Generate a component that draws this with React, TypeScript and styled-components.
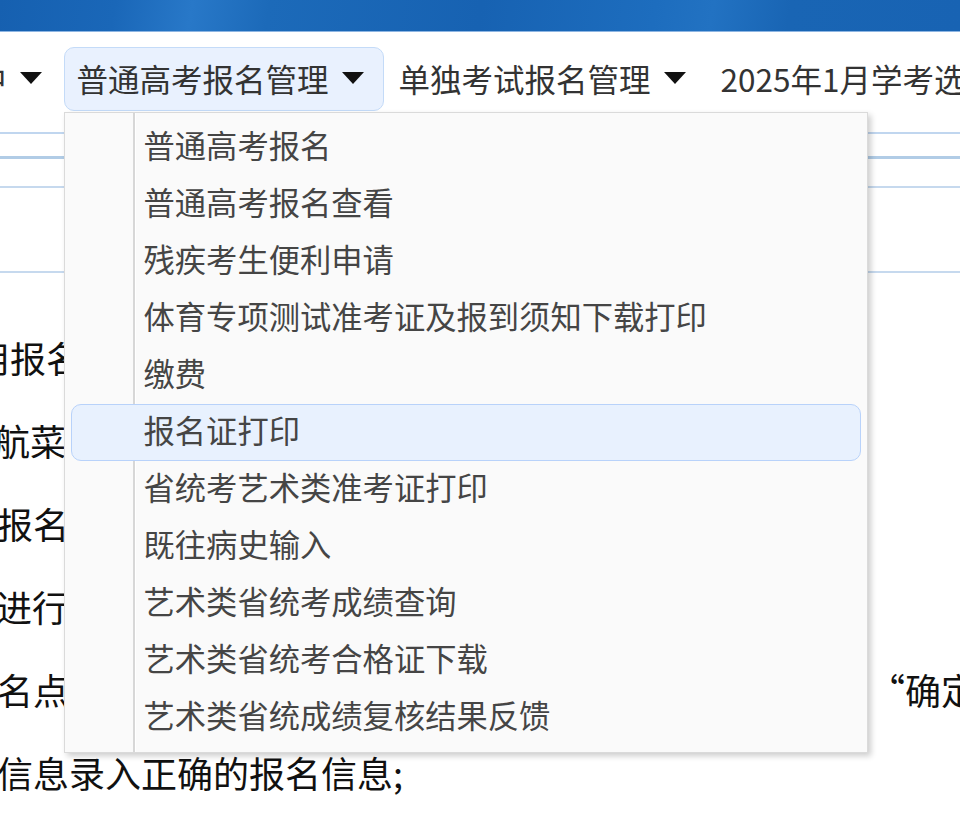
import React from "react";
import styled, { createGlobalStyle } from "styled-components";

const GlobalStyle = createGlobalStyle`
  html, body {
    margin: 0;
    padding: 0;
    background: #fff;
  }
  body {
    font-family: "Noto Sans CJK SC", "Noto Sans", "Liberation Sans", sans-serif;
  }
`;

const Page = styled.div`
  width: 100vw;
  height: 100vh;
  overflow: hidden;
  background: #fff;
`;

const TopBar = styled.div`
  height: 31px;
  border-bottom: 1px solid #8db5e2;
  background: linear-gradient(
    100deg,
    #1660b0 0%,
    #1a67b8 12%,
    #2878c8 20%,
    #1c6ab9 28%,
    #1762b2 50%,
    #1d6dbe 68%,
    #2272c2 74%,
    #1965b4 82%,
    #1863b3 100%
  );
`;

const NavBar = styled.nav`
  height: 100px;
  box-sizing: border-box;
  padding-top: 15px;
  margin-left: -101px;
  display: flex;
  align-items: flex-start;
  white-space: nowrap;
`;

const NavItem = styled.div<{ $active?: boolean }>`
  position: relative;
  flex-shrink: 0;
  display: flex;
  align-items: center;
  gap: 13px;
  height: 64px;
  box-sizing: border-box;
  padding: 0 19px 2px 12px;
  margin-right: 2px;
  border: 1px solid ${(p) => (p.$active ? "#c4dbf8" : "transparent")};
  border-radius: 10px;
  background: ${(p) => (p.$active ? "#e9f1fe" : "transparent")};
  font-size: 31.5px;
  color: #333;
`;

const Dropdown = styled.ul`
  position: absolute;
  top: calc(100% + 2px);
  left: -1px;
  z-index: 10;
  width: 804px;
  box-sizing: border-box;
  margin: 0;
  padding: 6px;
  list-style: none;
  border: 1px solid #dadada;
  background-color: #fafafa;
  background-image: linear-gradient(
    to right,
    transparent 68px,
    #d7d7d7 68px,
    #d7d7d7 70px,
    #ffffff 70px,
    #ffffff 71px,
    transparent 71px
  );
  box-shadow: 3px 3px 6px rgba(0, 0, 0, 0.2);
`;

const MenuItem = styled.li<{ $active?: boolean }>`
  height: 57px;
  box-sizing: border-box;
  display: flex;
  align-items: center;
  padding: 0 0 6px 72px;
  border: 1px solid ${(p) => (p.$active ? "#b8d2fa" : "transparent")};
  border-radius: 10px;
  background: ${(p) => (p.$active ? "#e8f1fe" : "transparent")};
  font-size: 31.3px;
  color: #454545;
`;

const Strip = styled.div`
  border-top: 2px solid #c0d6ef;
  padding-top: 22px;
`;

const TabLine = styled.div`
  height: 3px;
  background: #b1cce6;
`;

const Crumb = styled.div`
  height: 27px;
  border-bottom: 2px solid #c6d9ee;
`;

const TitleArea = styled.div`
  height: 83px;
  border-bottom: 2px solid #c6d9ee;
`;

const Content = styled.div`
  padding-top: 43px;
  font-size: 36px;
  line-height: 83px;
  color: #111;
`;

const Line = styled.p<{ $indent: number }>`
  margin: 0;
  white-space: nowrap;
  text-indent: ${(p) => p.$indent}px;
`;

function Caret() {
  return (
    <svg width="22" height="12" viewBox="0 0 22 12">
      <polygon points="0,0 22,0 11,12" fill="#111" />
    </svg>
  );
}

const menuItems = [
  "普通高考报名",
  "普通高考报名查看",
  "残疾考生便利申请",
  "体育专项测试准考证及报到须知下载打印",
  "缴费",
  "报名证打印",
  "省统考艺术类准考证打印",
  "既往病史输入",
  "艺术类省统考成绩查询",
  "艺术类省统考合格证下载",
  "艺术类省统成绩复核结果反馈",
];

const lines = [
  { text: "用报名系统进行网上报名；", indent: -26 },
  { text: "航菜单中选择“普通高考报名”；", indent: -6 },
  { text: "报名信息填写完成后请认真核对；", indent: -3 },
  { text: "进行报名信息的确认；", indent: -4 },
  { text: "名点击菜单进入报名信息的填写页面，核对无误后点击 “确定”按钮；", indent: -3 },
  { text: "信息录入正确的报名信息;", indent: -3 },
];

export default function App() {
  return (
    <Page>
      <GlobalStyle />
      <TopBar />
      <NavBar>
        <NavItem>
          考生中
          <Caret />
        </NavItem>
        <NavItem $active>
          普通高考报名管理
          <Caret />
          <Dropdown>
            {menuItems.map((item) => (
              <MenuItem key={item} $active={item === "报名证打印"}>
                {item}
              </MenuItem>
            ))}
          </Dropdown>
        </NavItem>
        <NavItem>
          单独考试报名管理
          <Caret />
        </NavItem>
        <NavItem>
          2025年1月学考选考报名
          <Caret />
        </NavItem>
      </NavBar>
      <Strip>
        <TabLine />
        <Crumb />
        <TitleArea />
      </Strip>
      <Content>
        {lines.map((l) => (
          <Line key={l.text} $indent={l.indent}>
            {l.text}
          </Line>
        ))}
      </Content>
    </Page>
  );
}
